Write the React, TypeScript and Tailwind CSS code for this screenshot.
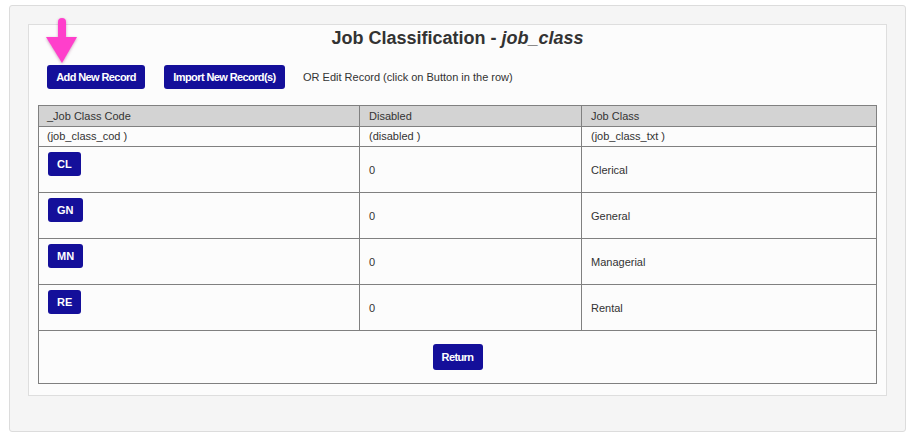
import React from 'react';

const rows = [
  { code: 'CL', disabled: '0', name: 'Clerical' },
  { code: 'GN', disabled: '0', name: 'General' },
  { code: 'MN', disabled: '0', name: 'Managerial' },
  { code: 'RE', disabled: '0', name: 'Rental' },
];

const btn =
  'inline-flex items-center justify-center rounded-[3px] text-white text-[11px] font-bold tracking-[-0.6px] bg-[#140f9a]';

const PinkArrow = () => (
  <svg
    width="34"
    height="50"
    viewBox="0 0 34 50"
    className="absolute left-[45px] top-[16px] drop-shadow-[0_1px_1.5px_rgba(120,0,80,0.35)]"
  >
    <rect x="13" y="2" width="8" height="22" rx="4" fill="#ff3fcb" />
    <polygon points="1,21 32,21 17,47" fill="#ff3fcb" />
  </svg>
);

export default function App() {
  return (
    <div
      className="relative min-h-screen bg-white pt-[5px] pl-[9px] pr-[8px]"
      style={{ fontFamily: '"Liberation Sans", Arial, sans-serif' }}
    >
      <div className="h-[427px] rounded-[3px] border border-[#dcdcdc] bg-[#f5f5f5] px-[18px] pt-[18px]">
        <div className="h-[372px] border border-[#dedede] bg-[#fcfcfc] px-[9px] pt-[1px]">
          <h1 className="text-center text-[18px] leading-[24px] font-bold text-[#333]">
            Job Classification - <i>job_class</i>
          </h1>

          <div className="mt-[15px] flex items-center pl-[9px]">
            <button className={`${btn} h-[24px] w-[98px] bg-[#0d0a5e]`}>Add New Record</button>
            <button className={`${btn} ml-[19px] h-[24px] w-[121px]`}>Import New Record(s)</button>
            <span className="ml-[18px] text-[11px] text-[#333]">
              OR Edit Record (click on Button in the row)
            </span>
          </div>

          <table className="mt-[16px] w-full border-collapse border border-[#808080] text-[11px] text-[#333]">
            <thead>
              <tr className="h-[21px] bg-[#d3d3d3]">
                <th className="w-[321px] border border-[#808080] px-[8px] text-left font-normal">_Job Class Code</th>
                <th className="w-[222px] border border-[#808080] px-[9px] text-left font-normal">Disabled</th>
                <th className="border border-[#808080] px-[9px] text-left font-normal">Job Class</th>
              </tr>
            </thead>
            <tbody>
              <tr className="h-[20px]">
                <td className="border border-[#808080] px-[8px]">(job_class_cod )</td>
                <td className="border border-[#808080] px-[9px]">(disabled )</td>
                <td className="border border-[#808080] px-[9px]">(job_class_txt )</td>
              </tr>
              {rows.map((r) => (
                <tr key={r.code} className="h-[46px]">
                  <td className="border border-[#808080] px-[9px] pt-[5px] align-top">
                    <button className={`${btn} h-[24px] px-[9px] tracking-normal`}>{r.code}</button>
                  </td>
                  <td className="border border-[#808080] px-[9px] pt-[2px] align-middle">{r.disabled}</td>
                  <td className="border border-[#808080] px-[9px] pt-[2px] align-middle">{r.name}</td>
                </tr>
              ))}
              <tr className="h-[53px]">
                <td colSpan={3} className="border border-[#808080] text-center align-middle">
                  <button className={`${btn} h-[26px] w-[50px] tracking-[-0.3px]`}>Return</button>
                </td>
              </tr>
            </tbody>
          </table>
        </div>
      </div>
      <PinkArrow />
    </div>
  );
}
